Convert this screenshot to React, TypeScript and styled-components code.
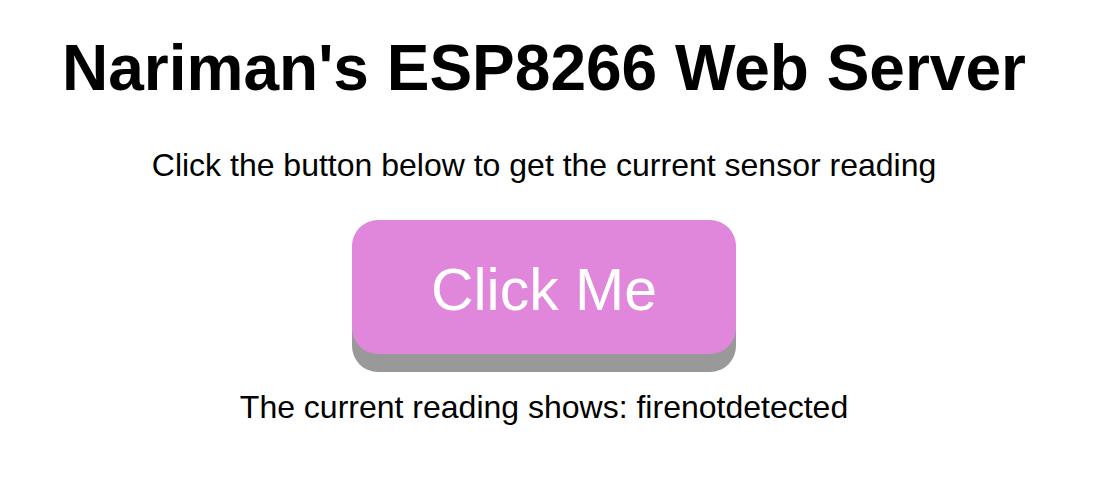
import React from "react";
import styled, { createGlobalStyle } from "styled-components";

const Global = createGlobalStyle`
  html, body { margin: 0; padding: 0; background: #fff; }
  body { font-family: "Liberation Sans", Arial, sans-serif; color: #000; }
`;

const Page = styled.main`
  width: 1088px;
  display: flex;
  flex-direction: column;
  align-items: center;
  text-align: center;
`;

const Title = styled.h1`
  margin: 35px 0 0;
  font-size: 64px;
  line-height: 66px;
  font-weight: 700;
  white-space: nowrap;
`;

const Text = styled.p<{ $top: number }>`
  margin: ${(p) => p.$top}px 0 0;
  font-size: 32px;
  line-height: 36px;
  white-space: nowrap;
`;

const Button = styled.button`
  margin-top: 37px;
  width: 384px;
  height: 134px;
  padding: 6px 0 0;
  border: none;
  border-radius: 26px;
  background: #e087dc;
  color: #fff;
  font-family: "Liberation Sans", Arial, sans-serif;
  font-size: 59px;
  box-shadow: 0 18px #999;
  cursor: pointer;
`;

export default function App() {
  return (
    <>
      <Global />
      <Page>
        <Title>Nariman's ESP8266 Web Server</Title>
        <Text $top={46}>Click the button below to get the current sensor reading</Text>
        <Button>Click Me</Button>
        <Text $top={35}>The current reading shows: firenotdetected</Text>
      </Page>
    </>
  );
}
